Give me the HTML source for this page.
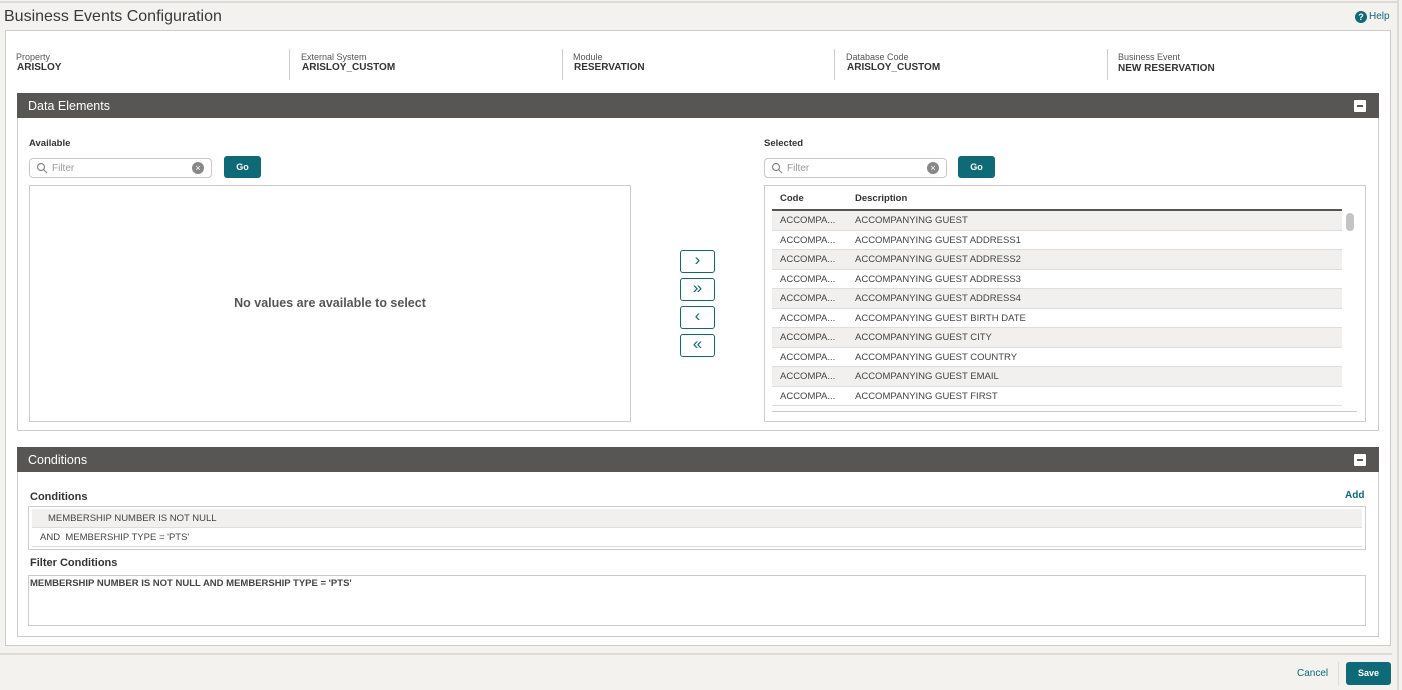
<!DOCTYPE html>
<html><head><meta charset="utf-8"><style>
*{box-sizing:border-box;margin:0;padding:0}
body{width:1402px;height:690px;background:#f3f2ef;font-family:"Liberation Sans",sans-serif;color:#333;position:relative;overflow:hidden}
.a{position:absolute}
.lbl{font-size:9px;color:#555}
.val{font-size:10px;font-weight:bold;color:#333}
.sep{width:1px;background:#ccc;top:49px;height:31px}
.bar{background:#575654;color:#fff;font-size:12.5px;padding:6px 11px;height:25px}
.min{width:12px;height:12px;background:#fff;border-radius:1px}
.min:after{content:"";position:absolute;left:3px;top:5px;width:6px;height:2px;background:#575654}
.filter{border:1px solid #c8c8c8;border-radius:4px;height:20px;background:#fff;font-size:10px;color:#999;padding:4px 0 0 22px}
.go{background:#0d6a76;color:#fff;font-size:9px;font-weight:bold;border-radius:3px;text-align:center;line-height:22px;height:22px}
.arr{width:35px;height:23px;border:1.5px solid #0d6a76;border-radius:3px;background:#fff;color:#0d6a76;text-align:center;font-size:17px;line-height:18px}
.row{left:772px;width:570px;height:19.5px;font-size:9.5px;color:#444;border-bottom:1px solid #ddd;line-height:20px}
.row span{position:absolute;left:8px}.row b{font-weight:normal;position:absolute;left:83px}
.g{background:#f1f0ee}
</style></head><body>
<div class="a" style="left:0;top:1px;width:1397px;height:2px;background:#dcdbd8"></div>
<div class="a" style="left:4px;top:8px;font-size:16px;color:#3a3a3a">Business Events Configuration</div>
<div class="a" style="left:1355px;top:11px;width:12px;height:12px;border-radius:50%;background:#0d6a76;color:#fff;font-size:9px;font-weight:bold;text-align:center;line-height:12px">?</div>
<div class="a" style="left:1369px;top:11px;font-size:10px;color:#0d6a76">Help</div>
<div class="a" style="left:1397px;top:0;width:2px;height:690px;background:#dcdbd8"></div>
<div class="a" style="left:5px;top:30px;width:1386px;height:616px;background:#fff;border:1px solid #ccc"></div>
<div class="a lbl" style="left:16px;top:52px">Property</div><div class="a val" style="left:17px;top:62px">ARISLOY</div>
<div class="a sep" style="left:289px"></div>
<div class="a lbl" style="left:301px;top:52px">External System</div><div class="a val" style="left:302px;top:62px">ARISLOY_CUSTOM</div>
<div class="a sep" style="left:562px"></div>
<div class="a lbl" style="left:573px;top:52px">Module</div><div class="a val" style="left:574px;top:62px">RESERVATION</div>
<div class="a sep" style="left:834px"></div>
<div class="a lbl" style="left:846px;top:52px">Database Code</div><div class="a val" style="left:847px;top:62px">ARISLOY_CUSTOM</div>
<div class="a sep" style="left:1107px"></div>
<div class="a lbl" style="left:1118px;top:52px">Business Event</div><div class="a val" style="left:1118px;top:63px">NEW RESERVATION</div>

<div class="a" style="left:17px;top:93px;width:1362px;height:338px;border:1px solid #ccc"></div>
<div class="a bar" style="left:17px;top:93px;width:1362px">Data Elements</div>
<div class="a min" style="left:1354px;top:100px"></div>
<div class="a" style="left:29px;top:138px;font-size:9.5px;font-weight:bold">Available</div>
<div class="a filter" style="left:29px;top:158px;width:183px">Filter</div>
<svg class="a" style="left:36px;top:162px" width="12" height="12"><circle cx="5" cy="5" r="3.5" fill="none" stroke="#888" stroke-width="1.2"/><line x1="7.5" y1="7.5" x2="11" y2="11" stroke="#888" stroke-width="1.2"/></svg>
<div class="a" style="left:192px;top:162px;width:12px;height:12px;border-radius:50%;background:#888;color:#fff;font-size:9px;text-align:center;line-height:12px">×</div>
<div class="a go" style="left:224px;top:156px;width:37px">Go</div>
<div class="a" style="left:29px;top:185px;width:602px;height:237px;border:1px solid #ccc"></div>
<div class="a" style="left:29px;top:296px;width:602px;text-align:center;font-size:12.5px;font-weight:bold;color:#555">No values are available to select</div>

<div class="a arr" style="left:680px;top:250px">&#8250;</div>
<div class="a arr" style="left:680px;top:278px">&#187;</div>
<div class="a arr" style="left:680px;top:306px">&#8249;</div>
<div class="a arr" style="left:680px;top:334px">&#171;</div>

<div class="a" style="left:764px;top:138px;font-size:9.5px;font-weight:bold">Selected</div>
<div class="a filter" style="left:764px;top:158px;width:183px">Filter</div>
<svg class="a" style="left:771px;top:162px" width="12" height="12"><circle cx="5" cy="5" r="3.5" fill="none" stroke="#888" stroke-width="1.2"/><line x1="7.5" y1="7.5" x2="11" y2="11" stroke="#888" stroke-width="1.2"/></svg>
<div class="a" style="left:927px;top:162px;width:12px;height:12px;border-radius:50%;background:#888;color:#fff;font-size:9px;text-align:center;line-height:12px">×</div>
<div class="a go" style="left:958px;top:156px;width:37px">Go</div>
<div class="a" style="left:764px;top:185px;width:602px;height:237px;border:1px solid #ccc;overflow:hidden"></div>
<div class="a" style="left:780px;top:193px;font-size:9.5px;font-weight:bold">Code</div>
<div class="a" style="left:855px;top:193px;font-size:9.5px;font-weight:bold">Description</div>
<div class="a" style="left:772px;top:209px;width:570px;height:2px;background:#555"></div>
<div class="a row g" style="top:211px"><span>ACCOMPA...</span><b>ACCOMPANYING GUEST</b></div>
<div class="a row" style="top:230.5px"><span>ACCOMPA...</span><b>ACCOMPANYING GUEST ADDRESS1</b></div>
<div class="a row g" style="top:250px"><span>ACCOMPA...</span><b>ACCOMPANYING GUEST ADDRESS2</b></div>
<div class="a row" style="top:269.5px"><span>ACCOMPA...</span><b>ACCOMPANYING GUEST ADDRESS3</b></div>
<div class="a row g" style="top:289px"><span>ACCOMPA...</span><b>ACCOMPANYING GUEST ADDRESS4</b></div>
<div class="a row" style="top:308.5px"><span>ACCOMPA...</span><b>ACCOMPANYING GUEST BIRTH DATE</b></div>
<div class="a row g" style="top:328px"><span>ACCOMPA...</span><b>ACCOMPANYING GUEST CITY</b></div>
<div class="a row" style="top:347.5px"><span>ACCOMPA...</span><b>ACCOMPANYING GUEST COUNTRY</b></div>
<div class="a row g" style="top:367px"><span>ACCOMPA...</span><b>ACCOMPANYING GUEST EMAIL</b></div>
<div class="a row" style="top:386.5px"><span>ACCOMPA...</span><b>ACCOMPANYING GUEST FIRST</b></div>
<div class="a" style="left:772px;top:411px;width:585px;height:1px;background:#ccc"></div>
<div class="a" style="left:1346px;top:213px;width:8px;height:18px;border-radius:4px;background:#c4c4c4"></div>

<div class="a" style="left:17px;top:447px;width:1362px;height:190px;border:1px solid #ccc"></div>
<div class="a bar" style="left:17px;top:447px;width:1362px">Conditions</div>
<div class="a min" style="left:1354px;top:454px"></div>
<div class="a" style="left:30px;top:491px;font-size:11px;font-weight:bold">Conditions</div>
<div class="a" style="left:1345px;top:490px;font-size:10px;font-weight:bold;color:#0d6a76">Add</div>
<div class="a" style="left:28px;top:506px;width:1338px;height:44px;border:1px solid #ccc"></div>
<div class="a" style="left:32px;top:509px;width:1330px;height:19px;background:#f1f0ee;border-bottom:1px solid #ddd;font-size:9.5px;color:#444;padding:4px 0 0 16px">MEMBERSHIP NUMBER IS NOT NULL</div>
<div class="a" style="left:32px;top:528px;width:1330px;height:19px;border-bottom:1px solid #ddd;font-size:9.5px;color:#444;padding:4px 0 0 8px">AND&nbsp;&nbsp;MEMBERSHIP TYPE = 'PTS'</div>
<div class="a" style="left:30px;top:557px;font-size:11px;font-weight:bold">Filter Conditions</div>
<div class="a" style="left:28px;top:575px;width:1338px;height:51px;border:1px solid #ccc;font-size:9.5px;font-weight:bold;color:#444;padding:2px 0 0 1px">MEMBERSHIP NUMBER IS NOT NULL AND MEMBERSHIP TYPE = 'PTS'</div>

<div class="a" style="left:0;top:653px;width:1392px;height:2px;background:#dcdbd8"></div>
<div class="a" style="left:1297px;top:668px;font-size:10px;color:#0d6a76">Cancel</div>
<div class="a" style="left:1338px;top:662px;width:1px;height:24px;background:#ddd"></div>
<div class="a go" style="left:1346px;top:662px;width:45px;height:23px;line-height:23px">Save</div>
</body></html>
